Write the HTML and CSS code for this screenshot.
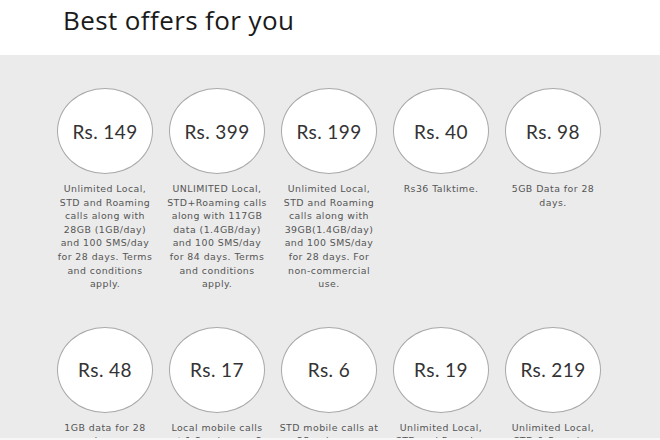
FILE: index.html
```html
<!DOCTYPE html>
<html>
<head>
<meta charset="utf-8">
<link rel="stylesheet" href="styles.css">
</head>
<body>
<header class="head">
  <h1 class="title">Best offers for you</h1>
</header>
<section class="offers">
  <div class="grid">
    <div class="card"><div class="circle">Rs. 149</div><p class="desc">Unlimited Local,<br>STD and Roaming<br>calls along with<br>28GB (1GB/day)<br>and 100 SMS/day<br>for 28 days. Terms<br>and conditions<br>apply.</p></div>
    <div class="card"><div class="circle">Rs. 399</div><p class="desc">UNLIMITED Local,<br>STD+Roaming calls<br>along with 117GB<br>data (1.4GB/day)<br>and 100 SMS/day<br>for 84 days. Terms<br>and conditions<br>apply.</p></div>
    <div class="card"><div class="circle">Rs. 199</div><p class="desc">Unlimited Local,<br>STD and Roaming<br>calls along with<br>39GB(1.4GB/day)<br>and 100 SMS/day<br>for 28 days. For<br>non-commercial<br>use.</p></div>
    <div class="card"><div class="circle">Rs. 40</div><p class="desc">Rs36 Talktime.</p></div>
    <div class="card"><div class="circle">Rs. 98</div><p class="desc">5GB Data for 28<br>days.</p></div>
    <div class="card"><div class="circle">Rs. 48</div><p class="desc">1GB data for 28<br>days.</p></div>
    <div class="card"><div class="circle">Rs. 17</div><p class="desc">Local mobile calls<br>at 1.2 paise per 2<br>seconds.</p></div>
    <div class="card"><div class="circle">Rs. 6</div><p class="desc">STD mobile calls at<br>25 paise per<br>minute.</p></div>
    <div class="card"><div class="circle">Rs. 19</div><p class="desc">Unlimited Local,<br>STD and Roaming<br>calls.</p></div>
    <div class="card"><div class="circle">Rs. 219</div><p class="desc">Unlimited Local,<br>STD &amp; Roaming<br>calls.</p></div>
  </div>
</section>
<div class="edge"></div>
</body>
</html>
```
FILE: styles.css
```css
html, body {
  margin: 0;
  padding: 0;
  background: #ebebeb;
}
.head {
  background: #ffffff;
  height: 55px;
  box-sizing: border-box;
  padding-left: 63px;
  padding-top: 3px;
}
.title {
  margin: 0;
  font-family: "Open Sans", "Liberation Sans", sans-serif;
  font-weight: 400;
  font-size: 26px;
  line-height: 34px;
  letter-spacing: 0.4px;
  color: #1a1a1a;
}
.offers {
  background: #ebebeb;
  padding: 33px 0 0 57px;
  height: 383px;
  box-sizing: border-box;
  overflow: hidden;
}
.edge {
  height: 2px;
  background: #f7f7f7;
}
.grid {
  display: grid;
  grid-template-columns: repeat(5, 96px);
  column-gap: 16px;
  row-gap: 36px;
}
.card {
  display: flex;
  flex-direction: column;
  align-items: center;
}
.circle {
  width: 96px;
  height: 86px;
  box-sizing: border-box;
  border: 1px solid #a9a9a9;
  border-radius: 50%;
  background: #ffffff;
  display: flex;
  align-items: center;
  justify-content: center;
  font-family: "Lato", "Liberation Sans", sans-serif;
  font-size: 19px;
  letter-spacing: 0.4px;
  color: #333333;
}
.desc {
  margin: 8px 0 0;
  width: 112px;
  white-space: nowrap;
  text-align: center;
  font-family: "DejaVu Sans", sans-serif;
  font-size: 9.4px;
  line-height: 13.6px;
  letter-spacing: 0.45px;
  color: #555555;
}
```
